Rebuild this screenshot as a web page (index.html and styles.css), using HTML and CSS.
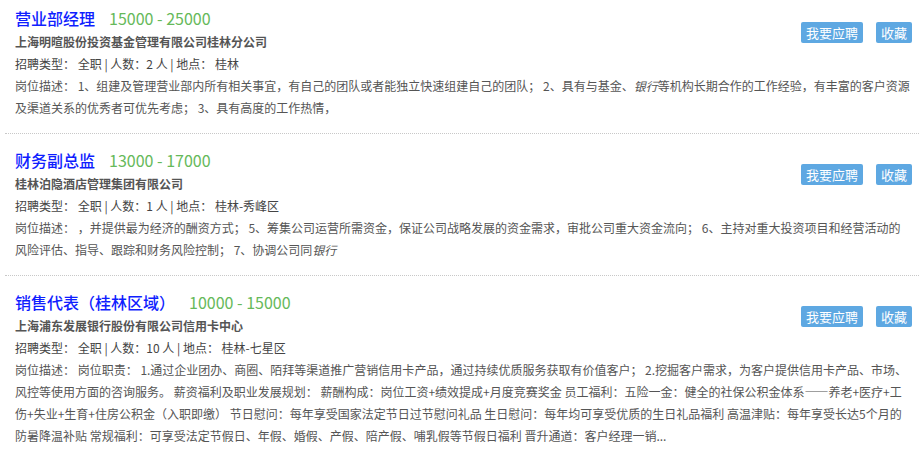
FILE: index.html
```html
<!DOCTYPE html>
<html lang="zh-CN">
<head>
    <meta charset="UTF-8">
    <title>职位列表</title>
    <link rel="stylesheet" href="styles.css">
</head>
<body>
    <div class="job-list">
        <div class="job">
            <div class="actions">
                <a class="btn" href="#">我要应聘</a>
                <a class="btn" href="#">收藏</a>
            </div>
            <h2 class="title"><a href="#">营业部经理</a><span class="salary">15000 - 25000</span></h2>
            <p class="company">上海明暄股份投资基金管理有限公司桂林分公司</p>
            <p class="meta">招聘类型： 全职 | 人数：2 人 | 地点： 桂林</p>
            <p class="desc">岗位描述： 1、组建及管理营业部内所有相关事宜，有自己的团队或者能独立快速组建自己的团队； 2、具有与基金、<em>银行</em>等机构长期合作的工作经验，有丰富的客户资源及渠道关系的优秀者可优先考虑； 3、具有高度的工作热情，</p>
        </div>

        <div class="job">
            <div class="actions">
                <a class="btn" href="#">我要应聘</a>
                <a class="btn" href="#">收藏</a>
            </div>
            <h2 class="title"><a href="#">财务副总监</a><span class="salary">13000 - 17000</span></h2>
            <p class="company">桂林泊隐酒店管理集团有限公司</p>
            <p class="meta">招聘类型： 全职 | 人数：1 人 | 地点： 桂林-秀峰区</p>
            <p class="desc">岗位描述： ，并提供最为经济的酬资方式； 5、筹集公司运营所需资金，保证公司战略发展的资金需求，审批公司重大资金流向； 6、主持对重大投资项目和经营活动的风险评估、指导、跟踪和财务风险控制； 7、协调公司同<em>银行</em></p>
        </div>

        <div class="job">
            <div class="actions">
                <a class="btn" href="#">我要应聘</a>
                <a class="btn" href="#">收藏</a>
            </div>
            <h2 class="title"><a href="#">销售代表（桂林区域）</a><span class="salary">10000 - 15000</span></h2>
            <p class="company">上海浦东发展银行股份有限公司信用卡中心</p>
            <p class="meta">招聘类型： 全职 | 人数：10 人 | 地点： 桂林-七星区</p>
            <p class="desc">岗位描述： 岗位职责： 1.通过企业团办、商圈、陌拜等渠道推广营销信用卡产品，通过持续优质服务获取有价值客户； 2.挖掘客户需求，为客户提供信用卡产品、市场、风控等使用方面的咨询服务。 薪资福利及职业发展规划： 薪酬构成：岗位工资+绩效提成+月度竞赛奖金 员工福利：五险一金：健全的社保公积金体系——养老+医疗+工伤+失业+生育+住房公积金（入职即缴） 节日慰问：每年享受国家法定节日过节慰问礼品 生日慰问：每年均可享受优质的生日礼品福利 高温津贴：每年享受长达5个月的防暑降温补贴 常规福利：可享受法定节假日、年假、婚假、产假、陪产假、哺乳假等节假日福利 晋升通道：客户经理一销...</p>
        </div>
    </div>
</body>
</html>
```

FILE: styles.css
```css
body { margin: 0; background: #fff; font-family: "Noto Sans CJK SC", "Noto Sans", sans-serif; font-size: 12px; color: #555; }
.job-list { margin-left: 5px; }
.job { padding: 13px 7px 14px 10px; border-bottom: 1px dotted #c8c8c8; }
.job:first-child { padding-top: 5px; }
.actions { float: right; display: flex; gap: 13px; margin-top: 17px; }
.btn { display: block; height: 21px; line-height: 21px; padding: 0 5px; background: #5ea8e2; color: #fff; font-size: 13px; text-decoration: none; border-radius: 2px; }
.title { margin: 0; height: 26px; line-height: 26px; font-size: 16px; font-weight: 500; }
.title a { color: #0f1eff; text-decoration: none; }
.salary { margin-left: 14px; color: #66b95a; font-size: 16px; font-weight: normal; }
.company { margin: 0; line-height: 22px; font-weight: bold; color: #555; }
.meta { margin: 0; line-height: 22px; color: #444; }
.desc { margin: 0 2px 0 0; line-height: 22px; color: #555; }
.desc em { font-style: italic; }
```
